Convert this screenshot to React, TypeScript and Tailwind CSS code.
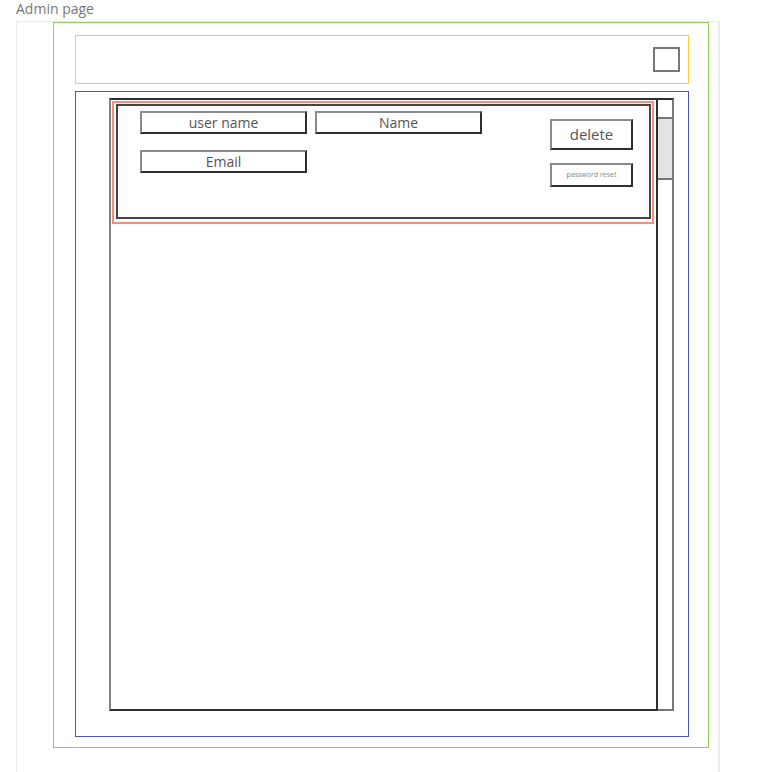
import React from 'react';

const Field: React.FC<{ label: string }> = ({ label }) => (
  <div className="flex h-[23px] w-[167px] items-center justify-center border-2 border-t-[#8a8a8a] border-l-[#8a8a8a] border-r-[#2e2e2e] border-b-[#2e2e2e] text-[14px] leading-none text-[#555]">
    {label}
  </div>
);

const UserRow: React.FC = () => (
  <div className="ml-[1px] mr-[2px] mt-[1px] border-2 border-[#ff8a78] pb-[3px] pl-[2px] pr-[1px] pt-[1px]">
    <div className="flex h-[115px] justify-between border-2 border-[#444] pl-[22px] pr-[16px] pt-[5px]">
      <div className="flex flex-col gap-[16px]">
        <div className="flex gap-[8px]">
          <Field label="user name" />
          <Field label="Name" />
        </div>
        <Field label="Email" />
      </div>
      <div className="flex flex-col gap-[13px] pt-[8px]">
        <div className="flex h-[31px] w-[83px] items-center justify-center border-2 border-t-[#8a8a8a] border-l-[#8a8a8a] border-r-[#2e2e2e] border-b-[#2e2e2e] text-[15px] text-[#555]">
          delete
        </div>
        <div className="flex h-[24px] w-[83px] items-center justify-center border-2 border-t-[#8a8a8a] border-l-[#8a8a8a] border-r-[#2e2e2e] border-b-[#2e2e2e] text-[7px] text-[#888]">
          password reset
        </div>
      </div>
    </div>
  </div>
);

const App: React.FC = () => {
  return (
    <div className="min-h-screen overflow-hidden bg-white font-['Open_Sans',sans-serif]">
      <div className="h-[21px] pl-[16px] pt-[1px] text-[14px] leading-[15px] text-[#777]">Admin page</div>
      <div className="ml-[16px] h-[760px] w-[704px] border border-r-2 border-[#ebebeb] border-b-0">
        <div className="ml-[36px] h-[726px] w-[656px] border border-[#92d050] px-[21px] pt-[12px]">
          <div className="flex h-[49px] w-[614px] items-center justify-end border border-[#ffcc33] pr-[8px]">
            <div className="h-[25px] w-[27px] border-2 border-[#777]" />
          </div>
          <div className="mt-[7px] h-[646px] w-[614px] border border-[#4b55c9] pl-[33px] pt-[6px]">
            <div className="flex h-[613px] w-[565px]">
              <div className="flex-1 border-l-2 border-l-[#808080] border-t-2 border-t-[#2e2e2e] border-r-2 border-r-[#2e2e2e] border-b-2 border-b-[#2e2e2e]">
                <UserRow />
              </div>
              <div className="w-[16px] border-t-2 border-t-[#2e2e2e] border-r-2 border-r-[#777] border-b-2 border-b-[#777]">
                <div className="mt-[17px] h-[63px] border-y-2 border-[#777] bg-[#e3e3e3]" />
              </div>
            </div>
          </div>
        </div>
      </div>
    </div>
  );
};

export default App;
